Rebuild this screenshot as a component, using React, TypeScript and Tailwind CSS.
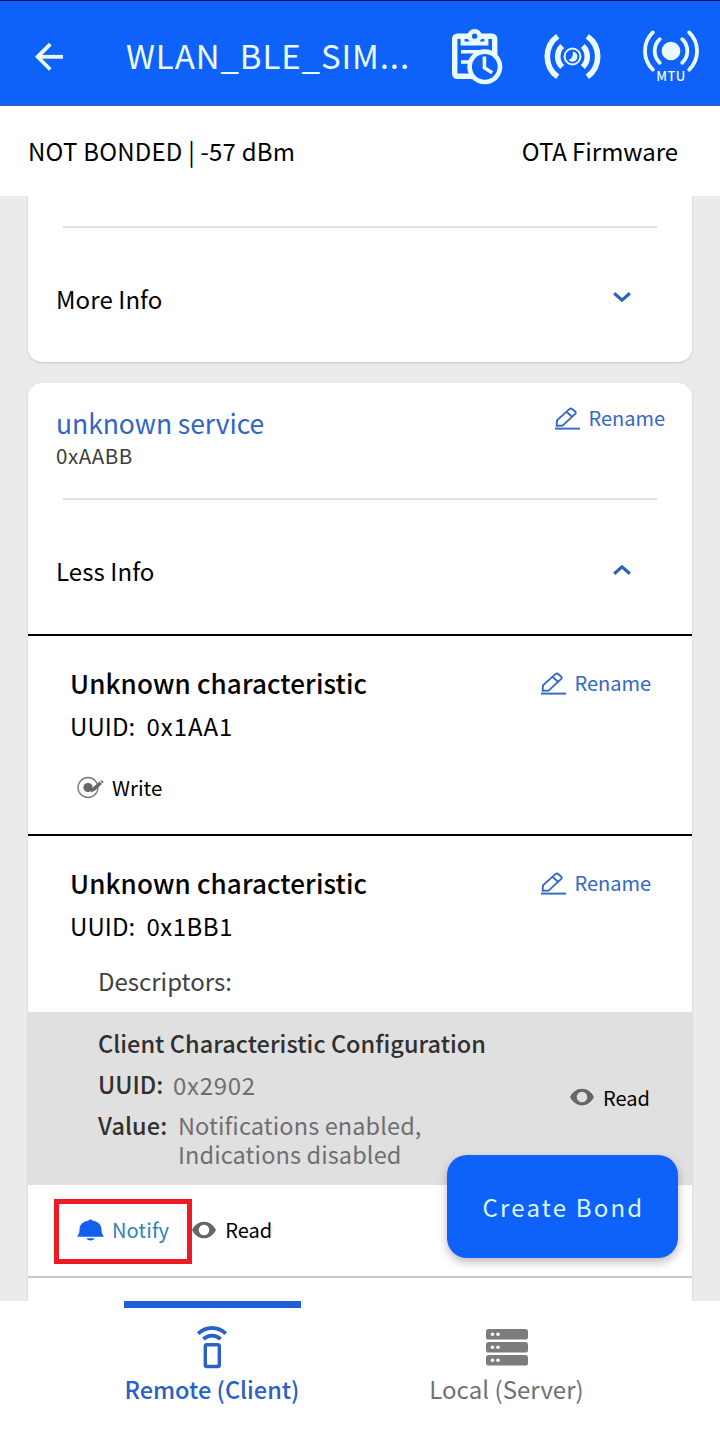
import type { ReactNode } from "react";

function BackIcon() {
  return (
    <svg width="30" height="30" viewBox="0 0 30 30" className="mt-[41px] shrink-0" fill="none" stroke="#e9fbff" strokeWidth="3.8">
      <path d="M29 14.8H3.5" />
      <path d="M16.3 2.2 3.6 14.8l12.7 12.7" />
    </svg>
  );
}

function ClipboardClockIcon() {
  return (
    <svg width="52" height="57" viewBox="0 0 52 57" className="mt-[27px] shrink-0" fill="none" stroke="#e9fbff">
      <rect x="3.7" y="8.2" width="40" height="40" rx="2.5" strokeWidth="5.4" />
      <circle cx="23.6" cy="8.2" r="7.3" fill="#e9fbff" stroke="none" />
      <circle cx="23.6" cy="8.2" r="2.6" fill="#0f62f9" stroke="none" />
      <path d="M11.6 9.5v6h23.8v-6" strokeWidth="4" />
      <path d="M10 23.8h19M10 34h9" strokeWidth="3.6" />
      <circle cx="33.8" cy="38.8" r="15.2" fill="#0f62f9" strokeWidth="4.6" />
      <path d="M33.4 28.5v11.2l7.8 5" strokeWidth="3.6" />
    </svg>
  );
}

function BroadcastIcon() {
  return (
    <svg width="57" height="57" viewBox="-28.5 -28.5 57 57" className="ml-[41px] mt-[27px] shrink-0" fill="none" stroke="#e9fbff" strokeWidth="5.6">
      <path d="M-14.8-20.3a25 25 0 0 0 0 40.6M14.8-20.3a25 25 0 0 1 0 40.6" />
      <path d="M-10.3-10.6a14.8 14.8 0 0 0 0 21.2M10.3-10.6a14.8 14.8 0 0 1 0 21.2" />
      <circle r="7.9" strokeWidth="2" />
      <path d="M.3-5A5.1 5.1 0 1 1-4 3.4C-.8 2.6.9-.6.3-5Z" fill="#e9fbff" stroke="none" />
    </svg>
  );
}

function MtuIcon() {
  return (
    <div className="ml-[41px] mt-[28px] flex w-[58px] shrink-0 flex-col items-center">
      <svg width="58" height="44" viewBox="-29 -22 58 44" fill="none" stroke="#e9fbff" strokeWidth="3.8" strokeLinecap="round">
        <path d="M-18.2-18.6a26 26 0 0 0 0 37.2M18.2-18.6a26 26 0 0 1 0 37.2" />
        <path d="M-11.2-11.8a16.2 16.2 0 0 0 0 23.6M11.2-11.8a16.2 16.2 0 0 1 0 23.6" />
        <circle r="9.3" fill="#e9fbff" stroke="none" />
      </svg>
      <span className="-mt-[4px] text-[13px] leading-[14px] font-medium tracking-[0.4px] text-[#e9fbff]">MTU</span>
    </div>
  );
}

function Rename() {
  return (
    <div className="flex h-[30px] items-center text-[#3468c4]">
      <svg width="25" height="23" viewBox="0 0 25 23" fill="none" stroke="currentColor" strokeWidth="1.9" strokeLinejoin="round">
        <path d="M1.6 18.7 2 13.4 14.6 1.9q1.2-1 2.4 0l3.2 2.7q1.1 1.1 0 2.3L7.6 18.6Z" />
        <path d="m11.6 4.9 5.4 4.9" />
        <path d="M0 21.6h25" />
      </svg>
      <span className="ml-[9px] text-[20px] tracking-[-0.02px]">Rename</span>
    </div>
  );
}

function Chevron({ up = false }: { up?: boolean }) {
  return (
    <svg width="18" height="10" viewBox="0 0 18 10" fill="none" stroke="#2a62be" strokeWidth="3.2">
      <path d={up ? "M1.2 8.8 9 1.9l7.8 6.9" : "M1.2 1.2 9 8.1l7.8-6.9"} />
    </svg>
  );
}

function EyeIcon() {
  return (
    <svg width="24" height="18" viewBox="0 0 24 18" fill="#666">
      <path fillRule="evenodd" d="M12 .7C6.8.7 2.5 3.9 0 9c2.5 5.1 6.8 8.3 12 8.3S21.5 14.1 24 9C21.5 3.9 17.2.7 12 .7Zm0 3a5.300 5.300 0 1 1 0 10.600 5.300 5.300 0 0 1 0-10.600Z" />
    </svg>
  );
}

function WriteIcon() {
  return (
    <svg width="27" height="24" viewBox="0 0 27 24">
      <circle cx="11" cy="12.5" r="10" fill="none" stroke="#777" strokeWidth="1.3" />
      <circle cx="11" cy="12.5" r="4.6" fill="#666" />
      <path d="m13.6 17.5 1.500-4.300 7.600-6.600 2.200 2.400-7.500 7Z" fill="#666" />
      <path d="m23.400 5.900 1.200-1 2.100 2.300-1.100 1Z" fill="#666" />
    </svg>
  );
}

function BellIcon() {
  return (
    <svg width="27" height="22" viewBox="0 0 27 22" fill="#135fee">
      <path d="M11.300 1.700a2.300 1.800 0 0 1 4.400 0c5 .6 8.500 3.700 8.700 7.800.1 3.300.4 5.500 2.600 8.200H0c2.200-2.700 2.500-4.900 2.600-8.200.2-4.100 3.700-7.200 8.700-7.800Z" />
      <path d="M9.500 19.300h8c-.7 1.500-2.100 2.200-4 2.200s-3.300-.7-4-2.200Z" />
    </svg>
  );
}

function RemoteIcon() {
  return (
    <svg width="30" height="44" viewBox="0 0 30 44" fill="none" stroke="#2a60c8" strokeWidth="3.400">
      <path d="M1.200 8.600c8-7.500 19.600-7.500 27.600 0" strokeWidth="3.800" />
      <path d="M6.400 14c5.200-4.600 12-4.600 17.200 0" strokeWidth="3.800" />
      <rect x="8.300" y="19.800" width="14" height="21.700" rx="1.500" />
    </svg>
  );
}

function ServerIcon() {
  return (
    <svg width="42" height="37" viewBox="0 0 42 37">
      {[0, 13, 26].map((y) => (
        <g key={y}>
          <rect y={y} width="42" height="10.6" rx="2.6" fill="#7c7c7c" />
          <circle cx="6.5" cy={y + 5.2} r="1.8" fill="#fff" />
          <circle cx="12" cy={y + 5.2} r="1.8" fill="#fff" />
        </g>
      ))}
    </svg>
  );
}

function InfoRow({ label, expanded = false }: { label: string; expanded?: boolean }) {
  return (
    <>
      <div className="ml-[35px] mr-[35px] h-[2px] bg-[#dfdfdf]" />
      <div className="flex h-[134px] items-center justify-between pl-[28px] pr-[61px] pt-[7px]">
        <span className="text-[24px] leading-[30px] tracking-[0.1px]">{label}</span>
        <div className={expanded ? "-mt-[2px]" : "-mt-[3px]"}>
          <Chevron up={expanded} />
        </div>
      </div>
    </>
  );
}

function Characteristic({ uuid, children }: { uuid: ReactNode; children: ReactNode }) {
  return (
    <section className="border-t-2 border-black pt-[29px]">
      <div className="flex items-start justify-between pl-[42px] pr-[41px]">
        <h2 className="text-[26px] leading-[36px] font-medium tracking-[0.13px]">Unknown characteristic</h2>
        <div className="mt-[3px]">
          <Rename />
        </div>
      </div>
      <div className="mt-[10px] flex pl-[42px] text-[24px] leading-[30px]">
        <span className="w-[76.5px] tracking-[0.1px]">UUID:</span>
        {uuid}
      </div>
      {children}
    </section>
  );
}

export default function App() {
  return (
    <div className="relative flex h-[1430px] w-[720px] flex-col overflow-hidden bg-white font-['Noto_Sans_CJK_SC','Noto_Sans',sans-serif] text-black">
      <header className="flex h-[106px] shrink-0 items-start border-t border-b border-t-[#06106a] border-b-[#3c62b4] bg-[#0f62f9] pl-[34px]">
        <BackIcon />
        <h1 className="ml-[62px] mt-[33px] w-[325px] shrink-0 text-[33px] leading-[42px] tracking-[0.9px] whitespace-nowrap text-[#e9fbff]">
          WLAN_BLE_SIM...
        </h1>
        <ClipboardClockIcon />
        <BroadcastIcon />
        <MtuIcon />
      </header>

      <div className="flex h-[90px] shrink-0 items-center justify-between pl-[28px] pr-[42px] text-[24px] leading-[30px]">
        <span className="tracking-[0.22px]">NOT BONDED | -57 dBm</span>
        <span className="tracking-[-0.04px]">OTA Firmware</span>
      </div>

      <main className="h-[1105px] shrink-0 overflow-hidden bg-[#ebebeb] px-[28px]">
        <article className="h-[166px] rounded-b-[14px] bg-white pt-[30px] shadow-[0_1px_2px_rgba(0,0,0,0.16)]">
          <InfoRow label="More Info" />
        </article>

        <article className="mt-[21px] h-[960px] rounded-t-[14px] bg-white shadow-[0_1px_2px_rgba(0,0,0,0.16)]">
          <div className="flex h-[115px] items-start justify-between pl-[28px] pr-[27px] pt-[20px]">
            <div>
              <h2 className="mt-[3px] text-[26.5px] leading-[34px] tracking-[-0.06px] text-[#2f66c2]">unknown service</h2>
              <p className="mt-px text-[20.5px] leading-[28px] tracking-[0.6px] text-[#3c3c3c]">0xAABB</p>
            </div>
            <Rename />
          </div>
          <InfoRow label="Less Info" expanded />

          <Characteristic uuid={<span className="tracking-[1px]">0x1AA1</span>}>
            <div className="mt-[31px] flex h-[62px] items-start pl-[49px]">
              <div className="flex h-[30px] items-center">
                <WriteIcon />
                <span className="ml-[8px] text-[20.5px] tracking-[0px]">Write</span>
              </div>
            </div>
          </Characteristic>

          <Characteristic uuid={<span className="tracking-[0.5px]">0x1BB1</span>}>
            <p className="mt-[25px] pl-[70px] text-[24px] leading-[30px] tracking-[0px] text-[#3f3f3f]">Descriptors:</p>
            <div className="mt-[16px] flex h-[173px] items-start justify-between bg-[#e0e0e0] pl-[70px] pr-[42px] pt-[16px] text-[23.5px] leading-[29px] text-[#6f6f6f]">
              <div>
                <h3 className="leading-[30px] font-medium tracking-[0.04px] text-[#303030]">Client Characteristic Configuration</h3>
                <div className="mt-[12px] flex">
                  <span className="w-[75px] font-medium tracking-[0px] text-[#303030]">UUID:</span>
                  <span className="text-[24px] tracking-[0.7px]">0x2902</span>
                </div>
                <div className="mt-[12px] flex">
                  <span className="w-[80px] font-medium tracking-[0.1px] text-[#303030]">Value:</span>
                  <p className="tracking-[0.12px]">
                    Notifications enabled,
                    <br />
                    Indications disabled
                  </p>
                </div>
              </div>
              <div className="mt-[54px] flex h-[30px] items-center text-[20px] text-black">
                <EyeIcon />
                <span className="ml-[9px] tracking-[0.05px]">Read</span>
              </div>
            </div>
            <div className="flex h-[91px] items-center pb-[2px] pl-[49px] text-[20px]">
              <BellIcon />
              <span className="ml-[8px] tracking-[0.16px] text-[#2d82bd]">Notify</span>
              <div className="ml-[23px] flex items-center">
                <EyeIcon />
                <span className="ml-[9px] tracking-[0.05px]">Read</span>
              </div>
            </div>
          </Characteristic>
          <div className="h-[2px] bg-[#c9c9c9]" />
        </article>
      </main>

      <nav className="grid h-[129px] shrink-0 grid-cols-2 bg-white pl-[64px] pr-[66px] text-[24px]">
        <div className="flex flex-col items-center">
          <div className="ml-[2px] h-[7px] w-[177px] bg-[#1e60dc]" />
          <div className="mt-[17px] h-[44px]">
            <RemoteIcon />
          </div>
          <span className="ml-px mt-[5px] text-[23.5px] leading-[30px] font-medium text-[#2a60c8]">Remote (Client)</span>
        </div>
        <div className="flex flex-col items-center pt-[28px]">
          <ServerIcon />
          <span className="mt-[8px] leading-[30px] tracking-[0.05px] text-[#707070]">Local (Server)</span>
        </div>
      </nav>

      <div className="absolute left-[54px] top-[1199px] h-[65px] w-[138px] border-[5px] border-[#ed1c24]" />
      <button className="absolute left-[447px] top-[1155px] flex h-[103px] w-[231px] items-center justify-center rounded-[20px] bg-[#0f62f9] pl-[2px] text-[24px] tracking-[2.2px] text-[#dcf6ff] shadow-[0_4px_10px_rgba(0,0,0,0.28)]">
        Create Bond
      </button>
    </div>
  );
}
